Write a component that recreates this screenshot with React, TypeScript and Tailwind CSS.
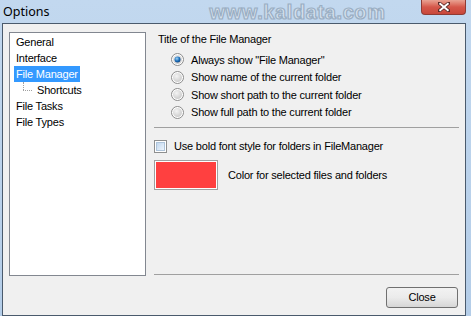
function Radio({ checked }: { checked?: boolean }) {
  return (
    <svg width="13" height="13" viewBox="0 0 13 13" className="shrink-0">
      <defs>
        <radialGradient id={checked ? 'rg1' : 'rg0'} cx="0.4" cy="0.35" r="0.7">
          <stop offset="0" stopColor="#f4f4f4" />
          <stop offset="1" stopColor="#c9c9c9" />
        </radialGradient>
        <radialGradient id="dot" cx="0.4" cy="0.35" r="0.7">
          <stop offset="0" stopColor="#9fd3f7" />
          <stop offset="0.6" stopColor="#1b6db8" />
          <stop offset="1" stopColor="#0e3f7a" />
        </radialGradient>
      </defs>
      <circle cx="6.5" cy="6.5" r="6" fill="#fff" stroke="#8b8b8b" />
      <circle cx="6.5" cy="6.5" r="4.5" fill={`url(#${checked ? 'rg1' : 'rg0'})`} />
      {checked && <circle cx="6.5" cy="6.5" r="3" fill="url(#dot)" />}
    </svg>
  );
}

function CheckBox() {
  return (
    <div className="w-[13px] h-[13px] border border-[#8e8f8f] bg-white p-[1px] shrink-0">
      <div className="w-full h-full bg-gradient-to-br from-[#c3d8ee] to-[#eef5fc] border border-[#aec4da]" />
    </div>
  );
}

const treeItems = ['General', 'Interface', 'File Manager', 'Shortcuts', 'File Tasks', 'File Types'];

export default function App() {
  return (
    <div
      className="w-[471px] h-[316px] flex flex-col bg-gradient-to-b from-[#c2d8ef] to-[#b4cde8] overflow-hidden"
      style={{ fontFamily: '"Liberation Sans", Arial, sans-serif' }}
    >
      {/* Title bar */}
      <div className="h-[23px] flex items-start relative shrink-0">
        <span
          className="pl-[3px] pt-[3px] text-[12.5px] text-black"
          style={{ fontFamily: '"Noto Sans", "Liberation Sans", sans-serif' }}
        >
          Options
        </span>
        <span className="ml-[160px] mt-[-3px] text-[20px] font-bold tracking-[0.6px] text-[#d6e1ec] [-webkit-text-stroke:1.2px_#9aaec3]">
          www.kaldata.com
        </span>
        <div className="absolute left-[421px] top-0 w-[45px] h-[15px] rounded-b-[4px] border border-t-0 border-[#8e3b34] bg-gradient-to-b from-[#e8a293] via-[#d5574a] to-[#c8473a] flex items-center justify-center">
          <svg width="12" height="10" viewBox="0 0 12 10">
            <path d="M1 1 L11 9 M11 1 L1 9" stroke="#5a2a28" strokeWidth="3.6" strokeLinecap="square" />
            <path d="M1.5 1.3 L10.5 8.7 M10.5 1.3 L1.5 8.7" stroke="#fff" strokeWidth="2" />
          </svg>
        </div>
      </div>

      {/* Client */}
      <div className="flex-1 ml-[2px] mr-[5px] border border-[#4a5a6c] bg-[#f0f0f0] flex flex-col px-[6px] pt-[8px] pb-[7px] text-[11px] tracking-[-0.2px] text-black">
        <div className="flex gap-[8px] h-[244px]">
          {/* Tree */}
          <div className="w-[137px] border border-[#828790] bg-white pt-[1px] pl-[4px]">
            {treeItems.map((t) => {
              const sel = t === 'File Manager';
              const child = t === 'Shortcuts';
              return (
                <div key={t} className="h-[16px] flex items-center">
                  {child && (
                    <div className="w-[21px] h-full relative shrink-0">
                      <div className="absolute left-[9px] top-0 h-[8px] border-l border-dotted border-[#a0a0a0]" />
                      <div className="absolute left-[9px] top-[8px] w-[9px] border-t border-dotted border-[#a0a0a0]" />
                    </div>
                  )}
                  <span className={sel ? 'h-full flex items-center px-[2px] bg-[#3399ff] text-white' : 'px-[2px]'}>
                    {t}
                  </span>
                </div>
              );
            })}
          </div>

          {/* Right panel */}
          <div className="flex-1 flex flex-col">
            <div className="pl-[4px] h-[14px] leading-[14px]">Title of the File Manager</div>
            <div className="pl-[17px] mt-[5px] flex flex-col">
              {[
                ['Always show "File Manager"', true],
                ['Show name of the current folder', false],
                ['Show short path to the current folder', false],
                ['Show full path to the current folder', false],
              ].map(([label, c]) => (
                <div key={label as string} className="h-[17.5px] flex items-center gap-[7px]">
                  <Radio checked={c as boolean} />
                  <span>{label as string}</span>
                </div>
              ))}
            </div>
            <div className="mt-[6px] border-t border-[#a0a0a0]" />
            <div className="mt-[11px] h-[14px] flex items-center gap-[7px]">
              <CheckBox />
              <span>Use bold font style for folders in FileManager</span>
            </div>
            <div className="mt-[7px] flex items-center gap-[10px]">
              <div className="w-[64px] h-[30px] border border-[#a0a0a0] p-[1px] bg-white">
                <div className="w-full h-full bg-[#ff4040]" />
              </div>
              <span>Color for selected files and folders</span>
            </div>
            <div className="flex-1" />
            <div className="border-t border-[#a0a0a0] mb-[1px]" />
          </div>
        </div>

        <div className="flex-1 flex items-end justify-end">
          <button className="w-[72px] h-[21px] mr-[1px] rounded-[3px] border border-[#707070] bg-gradient-to-b from-[#f2f2f2] via-[#ebebeb] to-[#d6d6d6] text-[11px] text-black">
            Close
          </button>
        </div>
      </div>
    </div>
  );
}
